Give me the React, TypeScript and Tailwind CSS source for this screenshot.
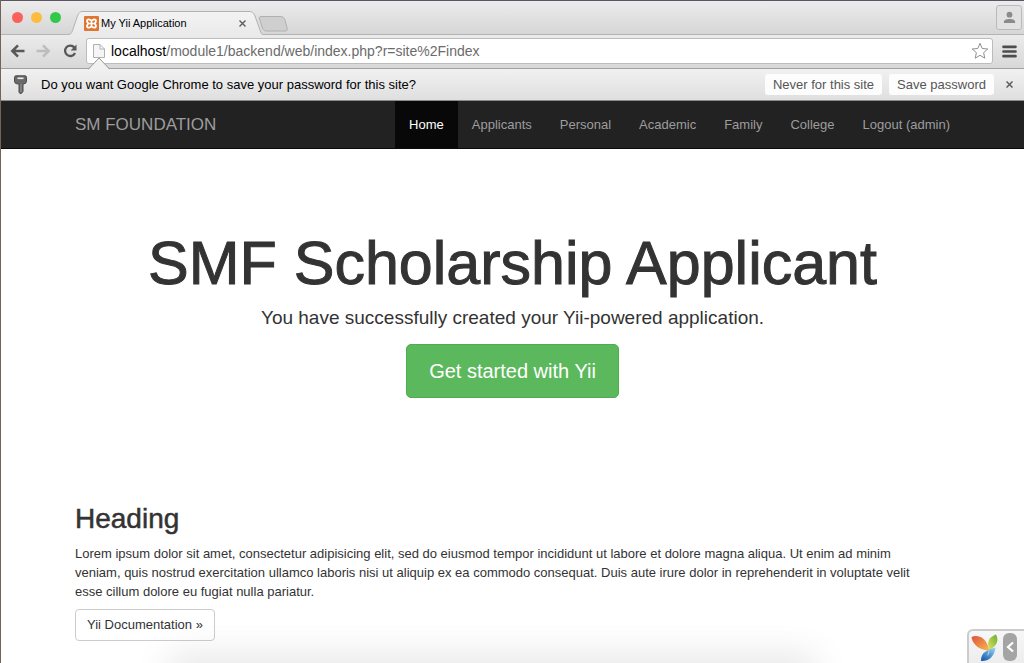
import type { ReactNode } from "react";

const NAV_ITEMS = ["Home", "Applicants", "Personal", "Academic", "Family", "College", "Logout (admin)"];

function TabStrip() {
  return (
    <header className="flex h-[34px] items-end border-t border-[#5a5560] bg-linear-to-b from-[#ececec] to-[#d6d6d6]">
      <div className="flex w-[67px] shrink-0 gap-2 self-center pl-[11px]">
        <button aria-label="Close window" className="size-[11px] rounded-full bg-[#fc605b]" />
        <button aria-label="Minimize window" className="size-[11px] rounded-full bg-[#fdbc40]" />
        <button aria-label="Zoom window" className="size-[11px] rounded-full bg-[#34c84a]" />
      </div>
      <div className="relative z-10 -mb-px flex h-6 w-[195px] shrink-0 items-center pr-4 pl-4">
        <svg className="absolute inset-0" width="195" height="24" viewBox="0 0 195 24" aria-hidden="true">
          <defs>
            <linearGradient id="tab" x1="0" y1="0" x2="0" y2="1">
              <stop offset="0" stopColor="#f3f3f3" />
              <stop offset="1" stopColor="#eaeaea" />
            </linearGradient>
          </defs>
          <path d="M0 24V23.500C3 23.500 3.500 22 4.500 19.500L9.500 5C11 1.500 12 .5 15 .5H181C184 .5 185.500 1.500 187 5L192 19C193 22 193.500 23.500 195 23.500V24Z" fill="url(#tab)" />
          <path d="M0 23.500C3 23.500 3.500 22 4.500 19.500L9.500 5C11 1.500 12 .5 15 .5H181C184 .5 185.500 1.500 187 5L192 19C193 22 193.500 23.500 195 23.500" fill="none" stroke="#b2b2b2" />
        </svg>
        <svg className="relative shrink-0" width="15" height="15" viewBox="0 0 15 15" aria-hidden="true">
          <rect width="15" height="15" rx="1" fill="#e0752f" />
          <path d="M7.500 5.200C6.500 3 3 2.600 3 5c0 1.200.8 1.700 1.400 2.500C3.800 8.300 3 8.800 3 10c0 2.400 3.500 2 4.500-.2C8.500 12 12 12.400 12 10c0-1.200-.8-1.700-1.400-2.500C11.200 6.700 12 6.200 12 5 12 2.600 8.500 3 7.500 5.200ZM5.500 7.500h4" fill="none" stroke="#fff" strokeWidth="1.800" />
        </svg>
        <span className="relative ml-[2px] flex-1 truncate text-[11px] text-black">My Yii Application</span>
        <button aria-label="Close tab" className="relative p-px text-[#5c5c5c]">
          <svg width="7" height="7" viewBox="0 0 7 7"><path d="m.5.5 6 6m0-6-6 6" stroke="currentColor" strokeWidth="1.400" /></svg>
        </button>
      </div>
      <button aria-label="New tab" className="-ml-[6px] mb-[2px] self-end">
        <svg width="33" height="17" viewBox="0 0 33 17"><path d="M4 1.500H23C26 1.500 27 2.500 28 5L30 13C30.700 15 30 16 28 16H10C7.500 16 6.500 15.500 5.500 13L2.500 4C2 2.200 2.500 1.500 4 1.500Z" fill="#cfcfcf" stroke="#b0b0b0" /></svg>
      </button>
      <button aria-label="User profile" className="mr-[2px] ml-auto flex h-[25px] w-[26px] items-center justify-center self-center rounded-[3px] border border-[#bababa] bg-[#e2e2e2]">
        <svg width="13" height="13" viewBox="0 0 13 13" fill="#8b8b8b"><circle cx="6.500" cy="3.700" r="2.900" /><path d="M.9 12V10.500C.9 8.600 4 7.900 6.500 7.900s5.600.7 5.600 2.600V12Z" /></svg>
      </button>
    </header>
  );
}

function Toolbar() {
  return (
    <div className="flex h-[35px] items-center border-t border-b border-t-[#b4b4b4] border-b-[#a1a1a1] bg-linear-to-b from-[#ebebeb] to-[#d8d8d8] pb-px pl-[9px]">
      <button aria-label="Back" className="text-[#585858]">
        <svg width="15" height="14" viewBox="0 0 15 14"><path d="M14.500 7H2.500M8 1.300 2.300 7 8 12.700" fill="none" stroke="currentColor" strokeWidth="2.500" /></svg>
      </button>
      <button aria-label="Forward" className="ml-[11px] text-[#bdbdbd]">
        <svg width="15" height="14" viewBox="0 0 15 14"><path d="M.5 7h12M7 1.300 12.700 7 7 12.700" fill="none" stroke="currentColor" strokeWidth="2.500" /></svg>
      </button>
      <button aria-label="Reload" className="ml-3 text-[#585858]">
        <svg width="15" height="14" viewBox="0 0 15 14"><path d="M11.300 3.500A5.200 5.200 0 1 0 12 9" fill="none" stroke="currentColor" strokeWidth="2.300" /><path d="M13.500.6V6.500H7.600Z" fill="currentColor" /></svg>
      </button>
      <form className="ml-[8px] flex h-[26px] flex-1 items-center rounded-[3px] border border-[#bcbcbc] bg-white px-[6px] text-[14px] leading-5">
        <svg width="12" height="14" viewBox="0 0 12 14" aria-hidden="true"><path d="M.5.500H7L11.500 5V13.500H.5ZM7 .5V5h4.500" fill="#f5f5f5" stroke="#b1b1b1" /></svg>
        <label htmlFor="address" className="ml-[6px] text-black">localhost</label>
        <input id="address" defaultValue="/module1/backend/web/index.php?r=site%2Findex" className="h-5 min-w-0 flex-1 bg-transparent text-[#6b6b6b] outline-none" />
        <button type="button" aria-label="Bookmark this page" className="-mr-[3px]">
          <svg width="18" height="18" viewBox="0 0 18 18"><path d="m9 1.300 2.200 5.200 5.600.5-4.200 3.700 1.200 5.500L9 13.300l-4.800 2.900 1.200-5.500L1.200 7l5.600-.5Z" fill="#fff" stroke="#8f8f8f" strokeLinejoin="round" /></svg>
        </button>
      </form>
      <button aria-label="Menu" className="mr-[7px] ml-[9px] text-[#4d4d4d]">
        <svg width="15" height="13" viewBox="0 0 15 13"><path d="M1.500 1.800h12M1.500 6.500h12M1.500 11.200h12" stroke="currentColor" strokeWidth="2.700" strokeLinecap="round" /></svg>
      </button>
    </div>
  );
}

function InfoButton({ children }: { children: ReactNode }) {
  return <button className="h-[21px] rounded-[3px] bg-[#fdfdfd] px-2 text-[13px] leading-[21px] text-[#555]">{children}</button>;
}

function PasswordBar() {
  return (
    <section className="relative flex h-8 items-center border-b border-[#8c8c8c] bg-linear-to-b from-[#f1f1f1] to-[#dfdfdf] pr-[10px] pl-3 text-[13px] text-black">
      <svg className="absolute -top-[12px] left-[87px]" width="22" height="13" viewBox="0 0 22 13" aria-hidden="true">
        <path d="M0 13 11 1 22 13Z" fill="#f1f1f1" />
        <path d="M0 12.500 11 1 22 12.500" fill="none" stroke="#999" />
      </svg>
      <svg width="15" height="20" viewBox="0 0 15 20" aria-hidden="true">
        <path d="M3 .8h9q1.500 0 1.500 1.500v4Q13.500 9 10 9v7.500l-2 2.300-2-1.300V9Q1.500 9 1.500 6.500v-4Q1.500.8 3 .8Z" fill="#696969" stroke="#4b4b4b" />
        <path d="M4.500 3.300h6" stroke="#eee" strokeWidth="1.600" /><path d="M8 9v8" stroke="#999" />
      </svg>
      <p className="ml-[13px]">Do you want Google Chrome to save your password for this site?</p>
      <div className="ml-auto flex gap-[7px]">
        <InfoButton>Never for this site</InfoButton>
        <InfoButton>Save password</InfoButton>
      </div>
      <button aria-label="Dismiss" className="ml-[11px] p-px text-[#5c5c5c]">
        <svg width="7" height="7" viewBox="0 0 7 7"><path d="m.5.5 6 6m0-6-6 6" stroke="currentColor" strokeWidth="1.500" /></svg>
      </button>
    </section>
  );
}

function SiteNav() {
  return (
    <nav className="flex h-12 items-stretch justify-between border-b border-[#090909] bg-[#222] pr-[60px] pl-[74px] text-[#9d9d9d]">
      <a href="#" className="text-[17px] leading-[48px]">SM FOUNDATION</a>
      <ul className="flex text-[13px] leading-[48px]">
        {NAV_ITEMS.map((item) => (
          <li key={item}>
            <a href="#" className={item === "Home" ? "block h-full bg-[#080808] px-[14px] text-white" : "block h-full px-[14px]"}>{item}</a>
          </li>
        ))}
      </ul>
    </nav>
  );
}

function DebugToolbar() {
  return (
    <aside className="absolute right-0 bottom-0 flex h-[34px] w-[57px] items-center justify-between rounded-tl-md border-t-2 border-l-2 border-[#ccc] bg-linear-to-b from-[#f7f7f7] to-[#ededed] pr-[7px] pl-[2px]">
      <svg width="28" height="29" viewBox="0 0 28 29" aria-hidden="true">
        <defs>
          <linearGradient id="leafRed" x1="0" y1="0" x2="1" y2="1"><stop stopColor="#dd5142" /><stop offset="1" stopColor="#f8b74e" /></linearGradient>
          <linearGradient id="leafGreen" x1="1" y1="0" x2="0" y2="1"><stop stopColor="#69ae35" /><stop offset="1" stopColor="#e4e35c" /></linearGradient>
          <linearGradient id="leafBlue" x1="0.8" y1="0" x2="0.200" y2="1"><stop stopColor="#8fd0f0" /><stop offset="1" stopColor="#175cae" /></linearGradient>
        </defs>
        <path d="M.5 4C6 1 16 4 18 17C12 18 2 14 .5 4Z" fill="url(#leafRed)" />
        <path d="M25 1.500C18 4 15.500 9 18 17C25 14 28.500 8 25 1.500Z" fill="url(#leafGreen)" />
        <path d="M24.500 14.500C17 16.500 9.500 19 10 28C17 28.500 23.500 24 24.500 14.500Z" fill="url(#leafBlue)" />
        <path d="M18 17C18 19.500 17.500 21 16.500 22.500" fill="none" stroke="#f2f2f2" strokeWidth="0.600" />
      </svg>
      <button aria-label="Expand toolbar" className="flex h-7 w-[14px] items-center justify-center rounded-md bg-[#a4a4a4]">
        <svg width="8" height="12" viewBox="0 0 8 12"><path d="M7 1.500 2 6l5 4.500" fill="none" stroke="#fff" strokeWidth="2.200" /></svg>
      </button>
    </aside>
  );
}

export default function App() {
  return (
    <div className="relative flex min-h-screen flex-col overflow-hidden border-l border-[#76615c] bg-white font-['Liberation_Sans',Arial,sans-serif] text-[#333]">
      <TabStrip />
      <Toolbar />
      <PasswordBar />
      <SiteNav />
      <main>
        <section className="flex flex-col items-center px-[74px] pt-[82px] text-center">
          <h1 className="text-[61px] leading-[65px] font-normal [-webkit-text-stroke:1px_#333]">SMF Scholarship Applicant</h1>
          <p className="mt-2 text-[19px] leading-[28px]">You have successfully created your Yii-powered application.</p>
          <a href="#" className="mt-3 rounded-[5px] border border-[#4cae4c] bg-[#5cb85c] px-[22px] py-[13px] text-[20px] leading-[26px] text-white">Get started with Yii</a>
        </section>
        <section className="px-[74px] pt-[104px]">
          <h2 className="text-[28px] leading-[34px] [-webkit-text-stroke:0.5px_#333]">Heading</h2>
          <p className="mt-2 max-w-[860px] text-[13px] leading-[19px]">
            Lorem ipsum dolor sit amet, consectetur adipisicing elit, sed do eiusmod tempor incididunt ut labore et dolore magna aliqua. Ut enim ad minim veniam, quis nostrud exercitation ullamco laboris nisi ut aliquip ex ea commodo consequat. Duis aute irure dolor in reprehenderit in voluptate velit esse cillum dolore eu fugiat nulla pariatur.
          </p>
          <a href="#" className="mt-2 inline-block rounded-[4px] border border-[#ccc] px-[11px] py-[6px] text-[13px] leading-[18px]">Yii Documentation »</a>
        </section>
      </main>
      <div className="pointer-events-none absolute -bottom-4 left-[17%] h-4 w-[62%] shadow-[0_0_36px_6px_rgba(0,0,0,0.12)]" />
      <DebugToolbar />
    </div>
  );
}
